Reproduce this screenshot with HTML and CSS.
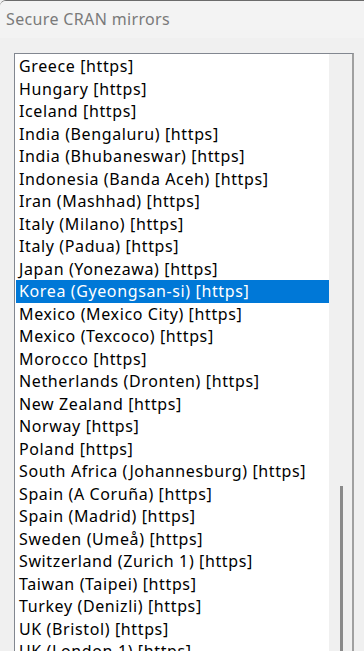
FILE: index.html
```html
<!DOCTYPE html>
<html lang="en">

<head>
    <meta charset="UTF-8">
    <meta name="viewport" content="width=device-width, initial-scale=1.0">
    <title>Secure CRAN mirrors</title>
    <link rel="stylesheet" href="styles.css">
</head>

<body>
    <div class="window">
        <div class="titlebar">Secure CRAN mirrors</div>
        <div class="content">
            <div class="listbox">
                <ul class="items">
                    <li>Greece [https]</li>
                    <li>Hungary [https]</li>
                    <li>Iceland [https]</li>
                    <li>India (Bengaluru) [https]</li>
                    <li>India (Bhubaneswar) [https]</li>
                    <li>Indonesia (Banda Aceh) [https]</li>
                    <li>Iran (Mashhad) [https]</li>
                    <li>Italy (Milano) [https]</li>
                    <li>Italy (Padua) [https]</li>
                    <li>Japan (Yonezawa) [https]</li>
                    <li class="selected">Korea (Gyeongsan-si) [https]</li>
                    <li>Mexico (Mexico City) [https]</li>
                    <li>Mexico (Texcoco) [https]</li>
                    <li>Morocco [https]</li>
                    <li>Netherlands (Dronten) [https]</li>
                    <li>New Zealand [https]</li>
                    <li>Norway [https]</li>
                    <li>Poland [https]</li>
                    <li>South Africa (Johannesburg) [https]</li>
                    <li>Spain (A Coruña) [https]</li>
                    <li>Spain (Madrid) [https]</li>
                    <li>Sweden (Umeå) [https]</li>
                    <li>Switzerland (Zurich 1) [https]</li>
                    <li>Taiwan (Taipei) [https]</li>
                    <li>Turkey (Denizli) [https]</li>
                    <li>UK (Bristol) [https]</li>
                    <li>UK (London 1) [https]</li>
                </ul>
                <div class="scrollbar">
                    <div class="thumb"></div>
                </div>
            </div>
        </div>
    </div>
</body>

</html>
```

FILE: styles.css
```css
html,
body {
    margin: 0;
    padding: 0;
    height: 100%;
    overflow: hidden;
    background-color: #f0f0f0;
}

.window {
    font-family: "Noto Sans", sans-serif;
    height: 100%;
    display: flex;
    flex-direction: column;
    border-top: 1px solid #6b6b6b;
    border-top-left-radius: 6px;
    box-sizing: border-box;
}

.titlebar {
    height: 37px;
    background-color: #f3f3f3;
    color: #7a7a7a;
    font-size: 16px;
    letter-spacing: 0.35px;
    line-height: 36px;
    padding-left: 6px;
    border-top-left-radius: 6px;
}

.content {
    flex: 1;
    padding: 15px 10px 0 14px;
    display: flex;
    min-height: 0;
}

.listbox {
    flex: 1;
    display: flex;
    border: 1px solid #828790;
    border-right: 2px solid #a0a0a0;
    border-bottom: none;
    background-color: #fff;
    min-height: 0;
    overflow: hidden;
}

.items {
    list-style: none;
    margin: 0;
    padding: 1px 0 0 1px;
    flex: 1;
    font-size: 16px;
    letter-spacing: 0.62px;
    color: #000;
}

.items li {
    height: 22.5px;
    line-height: 22.5px;
    padding-left: 3px;
    white-space: nowrap;
}

.items li.selected {
    background-color: #0078d7;
    color: #fff;
}

.scrollbar {
    width: 23px;
    background-color: #f0f0f0;
    position: relative;
}

.thumb {
    position: absolute;
    left: 11px;
    top: 432px;
    bottom: 0;
    width: 3px;
    background-color: #8a8a8a;
}
```
